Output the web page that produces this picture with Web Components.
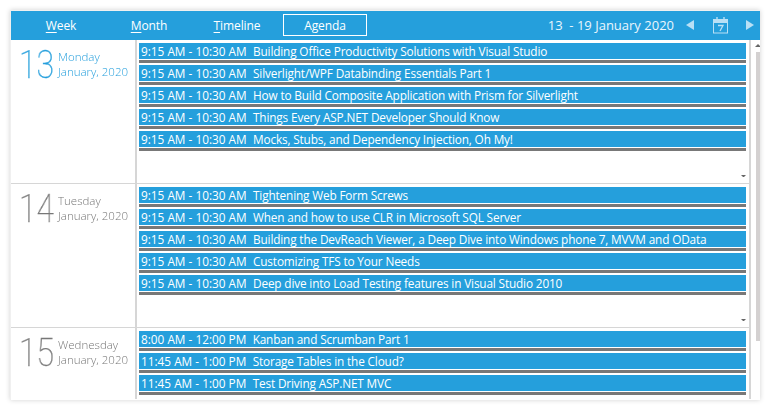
<!DOCTYPE html>
<html>
<head>
<meta charset="utf-8">
<title>Agenda</title>
<style>
  html, body { margin: 0; background: #fff; }
  body { padding: 10px; font-family: "Open Sans", "Noto Sans", sans-serif; }
</style>
</head>
<body>
<agenda-shell>
  <agenda-toolbar slot="toolbar" range="13  - 19 January 2020">
    <agenda-tab key="W" rest="eek"></agenda-tab>
    <agenda-tab key="M" rest="onth"></agenda-tab>
    <agenda-tab key="T" rest="imeline"></agenda-tab>
    <agenda-tab rest="Agenda" selected></agenda-tab>
  </agenda-toolbar>

  <agenda-day num="13" name="Monday" month="January, 2020" today more>
    <agenda-appt time="9:15 AM - 10:30 AM">Building Office Productivity Solutions with Visual Studio</agenda-appt>
    <agenda-appt time="9:15 AM - 10:30 AM">Silverlight/WPF Databinding Essentials Part 1</agenda-appt>
    <agenda-appt time="9:15 AM - 10:30 AM">How to Build Composite Application with Prism for Silverlight</agenda-appt>
    <agenda-appt time="9:15 AM - 10:30 AM">Things Every ASP.NET Developer Should Know</agenda-appt>
    <agenda-appt time="9:15 AM - 10:30 AM">Mocks, Stubs, and Dependency Injection, Oh My!</agenda-appt>
  </agenda-day>
  <agenda-day num="14" name="Tuesday" month="January, 2020" more>
    <agenda-appt time="9:15 AM - 10:30 AM">Tightening Web Form Screws</agenda-appt>
    <agenda-appt time="9:15 AM - 10:30 AM">When and how to use CLR in Microsoft SQL Server</agenda-appt>
    <agenda-appt time="9:15 AM - 10:30 AM">Building the DevReach Viewer, a Deep Dive into Windows phone 7, MVVM and OData</agenda-appt>
    <agenda-appt time="9:15 AM - 10:30 AM">Customizing TFS to Your Needs</agenda-appt>
    <agenda-appt time="9:15 AM - 10:30 AM">Deep dive into Load Testing features in Visual Studio 2010</agenda-appt>
  </agenda-day>
  <agenda-day num="15" name="Wednesday" month="January, 2020">
    <agenda-appt time="8:00 AM - 12:00 PM">Kanban and Scrumban Part 1</agenda-appt>
    <agenda-appt time="11:45 AM - 1:00 PM">Storage Tables in the Cloud?</agenda-appt>
    <agenda-appt time="11:45 AM - 1:00 PM">Test Driving ASP.NET MVC</agenda-appt>
  </agenda-day>
</agenda-shell>

<script>
const FONT = '"Open Sans", "Noto Sans", sans-serif';

class AgendaShell extends HTMLElement {
  constructor() {
    super();
    this.attachShadow({ mode: 'open' }).innerHTML = `
      <style>
        :host {
          display: flex;
          flex-direction: column;
          width: 750px;
          height: 390px;
          box-sizing: border-box;
          background: #fff;
          border: 1px solid #f0f0f0;
          border-right: 0;
          border-bottom: 0;
          box-shadow: 0 0 5px rgba(0, 0, 0, 0.18);
          font-family: ${FONT};
          overflow: hidden;
        }
        .body { flex: 1; display: flex; min-height: 0; }
        .days {
          width: 738px;
          height: 359px;
          overflow: hidden;
          border-right: 2px solid #d6d6d6;
          flex: none;
        }
        .bar {
          width: 4px;
          margin-left: 5px;
          display: flex;
          flex-direction: column;
          align-items: center;
          flex: none;
        }
        .up {
          margin-top: 4px;
          border: 3px solid transparent;
          border-top: 0;
          border-bottom: 3px solid #666;
        }
        .thumb { width: 4px; height: 289px; margin-top: 5px; background: #d4d1d1; }
      </style>
      <slot name="toolbar"></slot>
      <div class="body">
        <div class="days"><slot></slot></div>
        <div class="bar"><div class="up"></div><div class="thumb"></div></div>
      </div>`;
  }
}

class AgendaToolbar extends HTMLElement {
  constructor() {
    super();
    this.attachShadow({ mode: 'open' }).innerHTML = `
      <style>
        :host {
          display: flex;
          align-items: center;
          box-sizing: border-box;
          height: 29px;
          padding-bottom: 1px;
          flex: none;
          background: #259fdc;
          color: #fff;
          font-size: 12px;
          letter-spacing: -0.1px;
        }
        .tabs { display: flex; align-items: center; gap: 4px; padding-left: 8px; }
        .range { margin-left: auto; font-size: 13px; letter-spacing: 0; white-space: pre; color: #eaf6fc; }
        .nav { display: flex; align-items: center; }
        .prev, .next { border: 5px solid transparent; border-left-width: 0; border-right: 8px solid #b9e0f5; }
        .prev { margin-left: 12px; }
        .next { border-right: 0; border-left: 8px solid #b9e0f5; margin: 0 6px 0 18px; }
        svg { display: block; margin-left: 19px; }
      </style>
      <div class="tabs"><slot></slot></div>
      <div class="range"></div>
      <div class="nav">
        <div class="prev"></div>
        <svg width="15" height="17" viewBox="0 0 15 17" fill="none" stroke="#b9e0f5">
          <rect x="0.5" y="2.5" width="14" height="13.5"/>
          <path d="M1 3h13v3H1z" fill="#b9e0f5" stroke="none"/>
          <path d="M4 0v4M11 0v4" stroke-width="1.4"/>
          <path d="M5 8.5h5L7 14" stroke-width="1.3"/>
        </svg>
        <div class="next"></div>
      </div>`;
    this.shadowRoot.querySelector('.range').textContent = this.getAttribute('range');
  }
}

class AgendaTab extends HTMLElement {
  constructor() {
    super();
    this.attachShadow({ mode: 'open' }).innerHTML = `
      <style>
        :host {
          display: flex;
          align-items: center;
          justify-content: center;
          box-sizing: border-box;
          width: 84px;
          height: 22px;
        }
        :host([selected]) { border: 1px solid #fff; }
        u { text-underline-offset: 2px; }
      </style>
      <span><u></u><span class="rest"></span></span>`;
    const root = this.shadowRoot;
    const key = this.getAttribute('key');
    if (key) root.querySelector('u').textContent = key;
    else root.querySelector('u').remove();
    root.querySelector('.rest').textContent = this.getAttribute('rest');
  }
}

class AgendaDay extends HTMLElement {
  constructor() {
    super();
    this.attachShadow({ mode: 'open' }).innerHTML = `
      <style>
        :host {
          display: flex;
          height: 144px;
          box-sizing: border-box;
          border-bottom: 1px solid #d6d6d6;
          color: #777;
          position: relative;
        }
        :host([today]) { color: #259fdc; }
        :host(:last-child) { border-bottom: 0; }
        .date {
          width: 126px;
          flex: none;
          box-sizing: border-box;
          border-right: 2px solid #d6d6d6;
          display: flex;
          padding: 3px 0 0 8px;
        }
        .num {
          font-family: Roboto, ${FONT};
          font-size: 39px;
          font-weight: 100;
          -webkit-text-stroke: 0.35px currentColor;
          line-height: 44px;
          width: 39px;
          flex: none;
          transform: scaleX(0.82);
          transform-origin: left center;
          will-change: transform;
        }
        .label { font-size: 11.5px; font-weight: 300; line-height: 15px; padding-top: 6px; white-space: nowrap; will-change: transform; }
        .list { flex: 1; padding: 3px 3px 0 2px; min-width: 0; }
        .more {
          display: none;
          position: absolute;
          right: 3px;
          bottom: 6px;
          width: 5px;
          height: 2px;
          box-sizing: border-box;
          border: 2.5px solid transparent;
          border-bottom: 0;
          border-top: 2px solid #666;
        }
        :host([more]) .more { display: block; }
      </style>
      <div class="date">
        <div class="num"></div>
        <div class="label"><div class="name"></div><div class="month"></div></div>
      </div>
      <div class="list"><slot></slot></div>
      <div class="more"></div>`;
    const root = this.shadowRoot;
    root.querySelector('.num').textContent = this.getAttribute('num');
    root.querySelector('.name').textContent = this.getAttribute('name');
    root.querySelector('.month').textContent = this.getAttribute('month');
  }
}

class AgendaAppt extends HTMLElement {
  constructor() {
    super();
    this.attachShadow({ mode: 'open' }).innerHTML = `
      <style>
        :host {
          display: block;
          height: 22px;
          box-sizing: border-box;
          font-size: 11.8px;
          letter-spacing: -0.15px;
          color: #fff;
        }
        .box {
          height: 16px;
          line-height: 17px;
          background: #259fdc;
          padding-left: 2px;
          white-space: nowrap;
          overflow: hidden;
        }
        .foot { height: 3px; margin-top: 1px; background: #787878; }
        .time { margin-right: 6.4px; letter-spacing: 0; }
      </style>
      <div class="box"><span class="time"></span><slot></slot></div>
      <div class="foot"></div>`;
    this.shadowRoot.querySelector('.time').textContent = this.getAttribute('time');
  }
}

customElements.define('agenda-shell', AgendaShell);
customElements.define('agenda-toolbar', AgendaToolbar);
customElements.define('agenda-tab', AgendaTab);
customElements.define('agenda-day', AgendaDay);
customElements.define('agenda-appt', AgendaAppt);
</script>
</body>
</html>
